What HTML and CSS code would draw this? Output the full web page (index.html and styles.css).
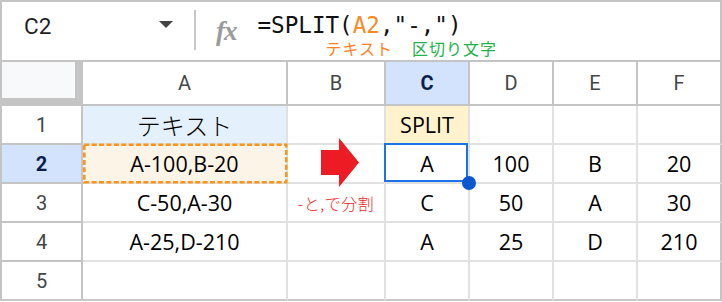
FILE: index.html
```html
<!DOCTYPE html>
<html lang="ja">
<head>
    <meta charset="UTF-8">
    <meta name="viewport" content="width=device-width, initial-scale=1.0">
    <title>SPLIT関数</title>
    <link rel="stylesheet" href="styles.css">
</head>
<body>

<div class="app">
    <div class="formula-bar">
        <div class="name-box">
            <span class="cell-ref">C2</span>
            <span class="caret"></span>
        </div>
        <div class="divider"></div>
        <div class="fx">fx</div>
        <div class="formula">
            <div class="formula-text">=SPLIT(<span class="ref">A2</span>,"-,")</div>
            <div class="notes">
                <span class="note-text">テキスト</span>
                <span class="note-delim">区切り文字</span>
            </div>
        </div>
    </div>

    <div class="sheet">
        <div class="corner"></div>
        <div class="col-head">A</div>
        <div class="col-head">B</div>
        <div class="col-head active">C</div>
        <div class="col-head">D</div>
        <div class="col-head">E</div>
        <div class="col-head last">F</div>

        <div class="row-head">1</div>
        <div class="cell label-text">テキスト</div>
        <div class="cell"></div>
        <div class="cell label-split">SPLIT</div>
        <div class="cell"></div>
        <div class="cell"></div>
        <div class="cell last"></div>

        <div class="row-head active">2</div>
        <div class="cell source">
            A-100,B-20
            <svg class="marching" width="208" height="42" viewBox="0 0 208 42">
                <rect x="2.3" y="1.7" width="202" height="37.5" fill="none" stroke="#f7951f" stroke-width="2.6" stroke-dasharray="5 2.4"/>
            </svg>
        </div>
        <div class="cell arrow-cell">
            <svg class="arrow" width="97" height="60" viewBox="0 0 97 60">
                <polygon points="33,15 51,15 51,3 71,27.5 51,52 51,40 33,40" fill="#ed1c24"/>
            </svg>
        </div>
        <div class="cell selected">A<span class="handle"></span></div>
        <div class="cell">100</div>
        <div class="cell">B</div>
        <div class="cell last">20</div>

        <div class="row-head">3</div>
        <div class="cell">C-50,A-30</div>
        <div class="cell hint">-と,で分割</div>
        <div class="cell">C</div>
        <div class="cell">50</div>
        <div class="cell">A</div>
        <div class="cell last">30</div>

        <div class="row-head">4</div>
        <div class="cell">A-25,D-210</div>
        <div class="cell"></div>
        <div class="cell">A</div>
        <div class="cell">25</div>
        <div class="cell">D</div>
        <div class="cell last">210</div>

        <div class="row-head bottom">5</div>
        <div class="cell bottom"></div>
        <div class="cell bottom"></div>
        <div class="cell bottom"></div>
        <div class="cell bottom"></div>
        <div class="cell bottom"></div>
        <div class="cell bottom last"></div>
    </div>
</div>

</body>
</html>
```

FILE: styles.css
```css
body {
    margin: 0;
    padding: 0;
    background-color: #fff;
    font-family: Roboto, "Noto Sans CJK JP", sans-serif;
}
.app {
    width: 722px;
    border-top: 2px solid #c4c4c4;
    border-left: 2px solid #c4c4c4;
    box-sizing: border-box;
}

/* formula bar */
.formula-bar {
    display: flex;
    align-items: flex-start;
    height: 60px;
    border-bottom: 2px solid #c4c4c4;
    border-right: 2px solid #c4c4c4;
    box-sizing: border-box;
}
.name-box {
    display: flex;
    align-items: center;
    justify-content: space-between;
    width: 192px;
    height: 48px;
    padding: 0 21px 0 22px;
    box-sizing: border-box;
}
.cell-ref {
    font-size: 22.5px;
    color: #1f1f1f;
}
.caret {
    width: 0;
    height: 0;
    margin-top: -4px;
    border-left: 7.5px solid transparent;
    border-right: 7.5px solid transparent;
    border-top: 7px solid #444;
}
.divider {
    width: 2px;
    height: 40px;
    margin-top: 8px;
    background-color: #c7c7c7;
}
.fx {
    margin-left: 20px;
    padding-top: 16px;
    font-family: "Liberation Serif", serif;
    font-style: italic;
    font-weight: bold;
    font-size: 27px;
    line-height: 26px;
    color: #9b9b9b;
    letter-spacing: -1px;
}
.formula {
    margin-left: 21px;
    padding-top: 10px;
}
.formula-text {
    font-family: "DejaVu Sans Mono", monospace;
    font-size: 22.6px;
    line-height: 26px;
    color: #111;
}
.formula-text .ref {
    color: #f98a28;
}
.notes {
    display: flex;
    gap: 19px;
    margin-left: 68px;
    font-family: "Noto Sans CJK JP", sans-serif;
    font-size: 16px;
    line-height: 20px;
    letter-spacing: 1px;
}
.note-text {
    color: #ff7f27;
}
.note-delim {
    color: #22b14c;
}

/* grid */
.sheet {
    display: grid;
    grid-template-columns: 81px 205px 98px 84px 84px 84px 84px;
    grid-template-rows: 44px repeat(5, 39px);
}
.sheet > div {
    box-sizing: border-box;
    display: flex;
    align-items: center;
    justify-content: center;
}
.corner {
    background-color: #f8f9fa;
    border-right: 8px solid #c4c4c4;
    border-bottom: 8px solid #c4c4c4;
}
.col-head,
.row-head {
    font-size: 20px;
    color: #444746;
    border-right: 2px solid #c4c4c4;
    border-bottom: 2px solid #c4c4c4;
}
.col-head.active,
.row-head.active {
    background-color: #d3e3fd;
    color: #0b1f4f;
    font-weight: bold;
}
.cell {
    position: relative;
    font-family: "Open Sans", "Noto Sans CJK JP", sans-serif;
    font-size: 21.5px;
    color: #000;
    border-right: 2px solid #e1e1e1;
    border-bottom: 2px solid #e1e1e1;
}
.cell.last {
    border-right-color: #c4c4c4;
}
.cell.bottom,
.row-head.bottom {
    border-bottom-color: #c8c8c8;
}
.label-text {
    background-color: #e4f0fb;
    font-family: "Noto Sans CJK JP", sans-serif;
    font-size: 24px;
    font-weight: 300;
}
.label-split {
    background-color: #fff2cc;
}
.source {
    background-color: #fdf4e8;
}
.marching {
    position: absolute;
    left: -1px;
    top: -2px;
}
.arrow {
    position: absolute;
    left: 0;
    top: -10px;
    overflow: visible;
}
.hint {
    font-family: "Noto Sans CJK JP", sans-serif;
    font-size: 16px;
    font-weight: 300;
    color: #ed1c24;
    letter-spacing: 0.5px;
}
.selected::after {
    content: "";
    position: absolute;
    top: -2px;
    left: -2px;
    right: 0;
    bottom: 0;
    border: 2.3px solid #1a73e8;
}
.handle {
    position: absolute;
    right: -8px;
    bottom: -8px;
    width: 14px;
    height: 14px;
    border-radius: 50%;
    background-color: #0b57d0;
    z-index: 2;
}
```
